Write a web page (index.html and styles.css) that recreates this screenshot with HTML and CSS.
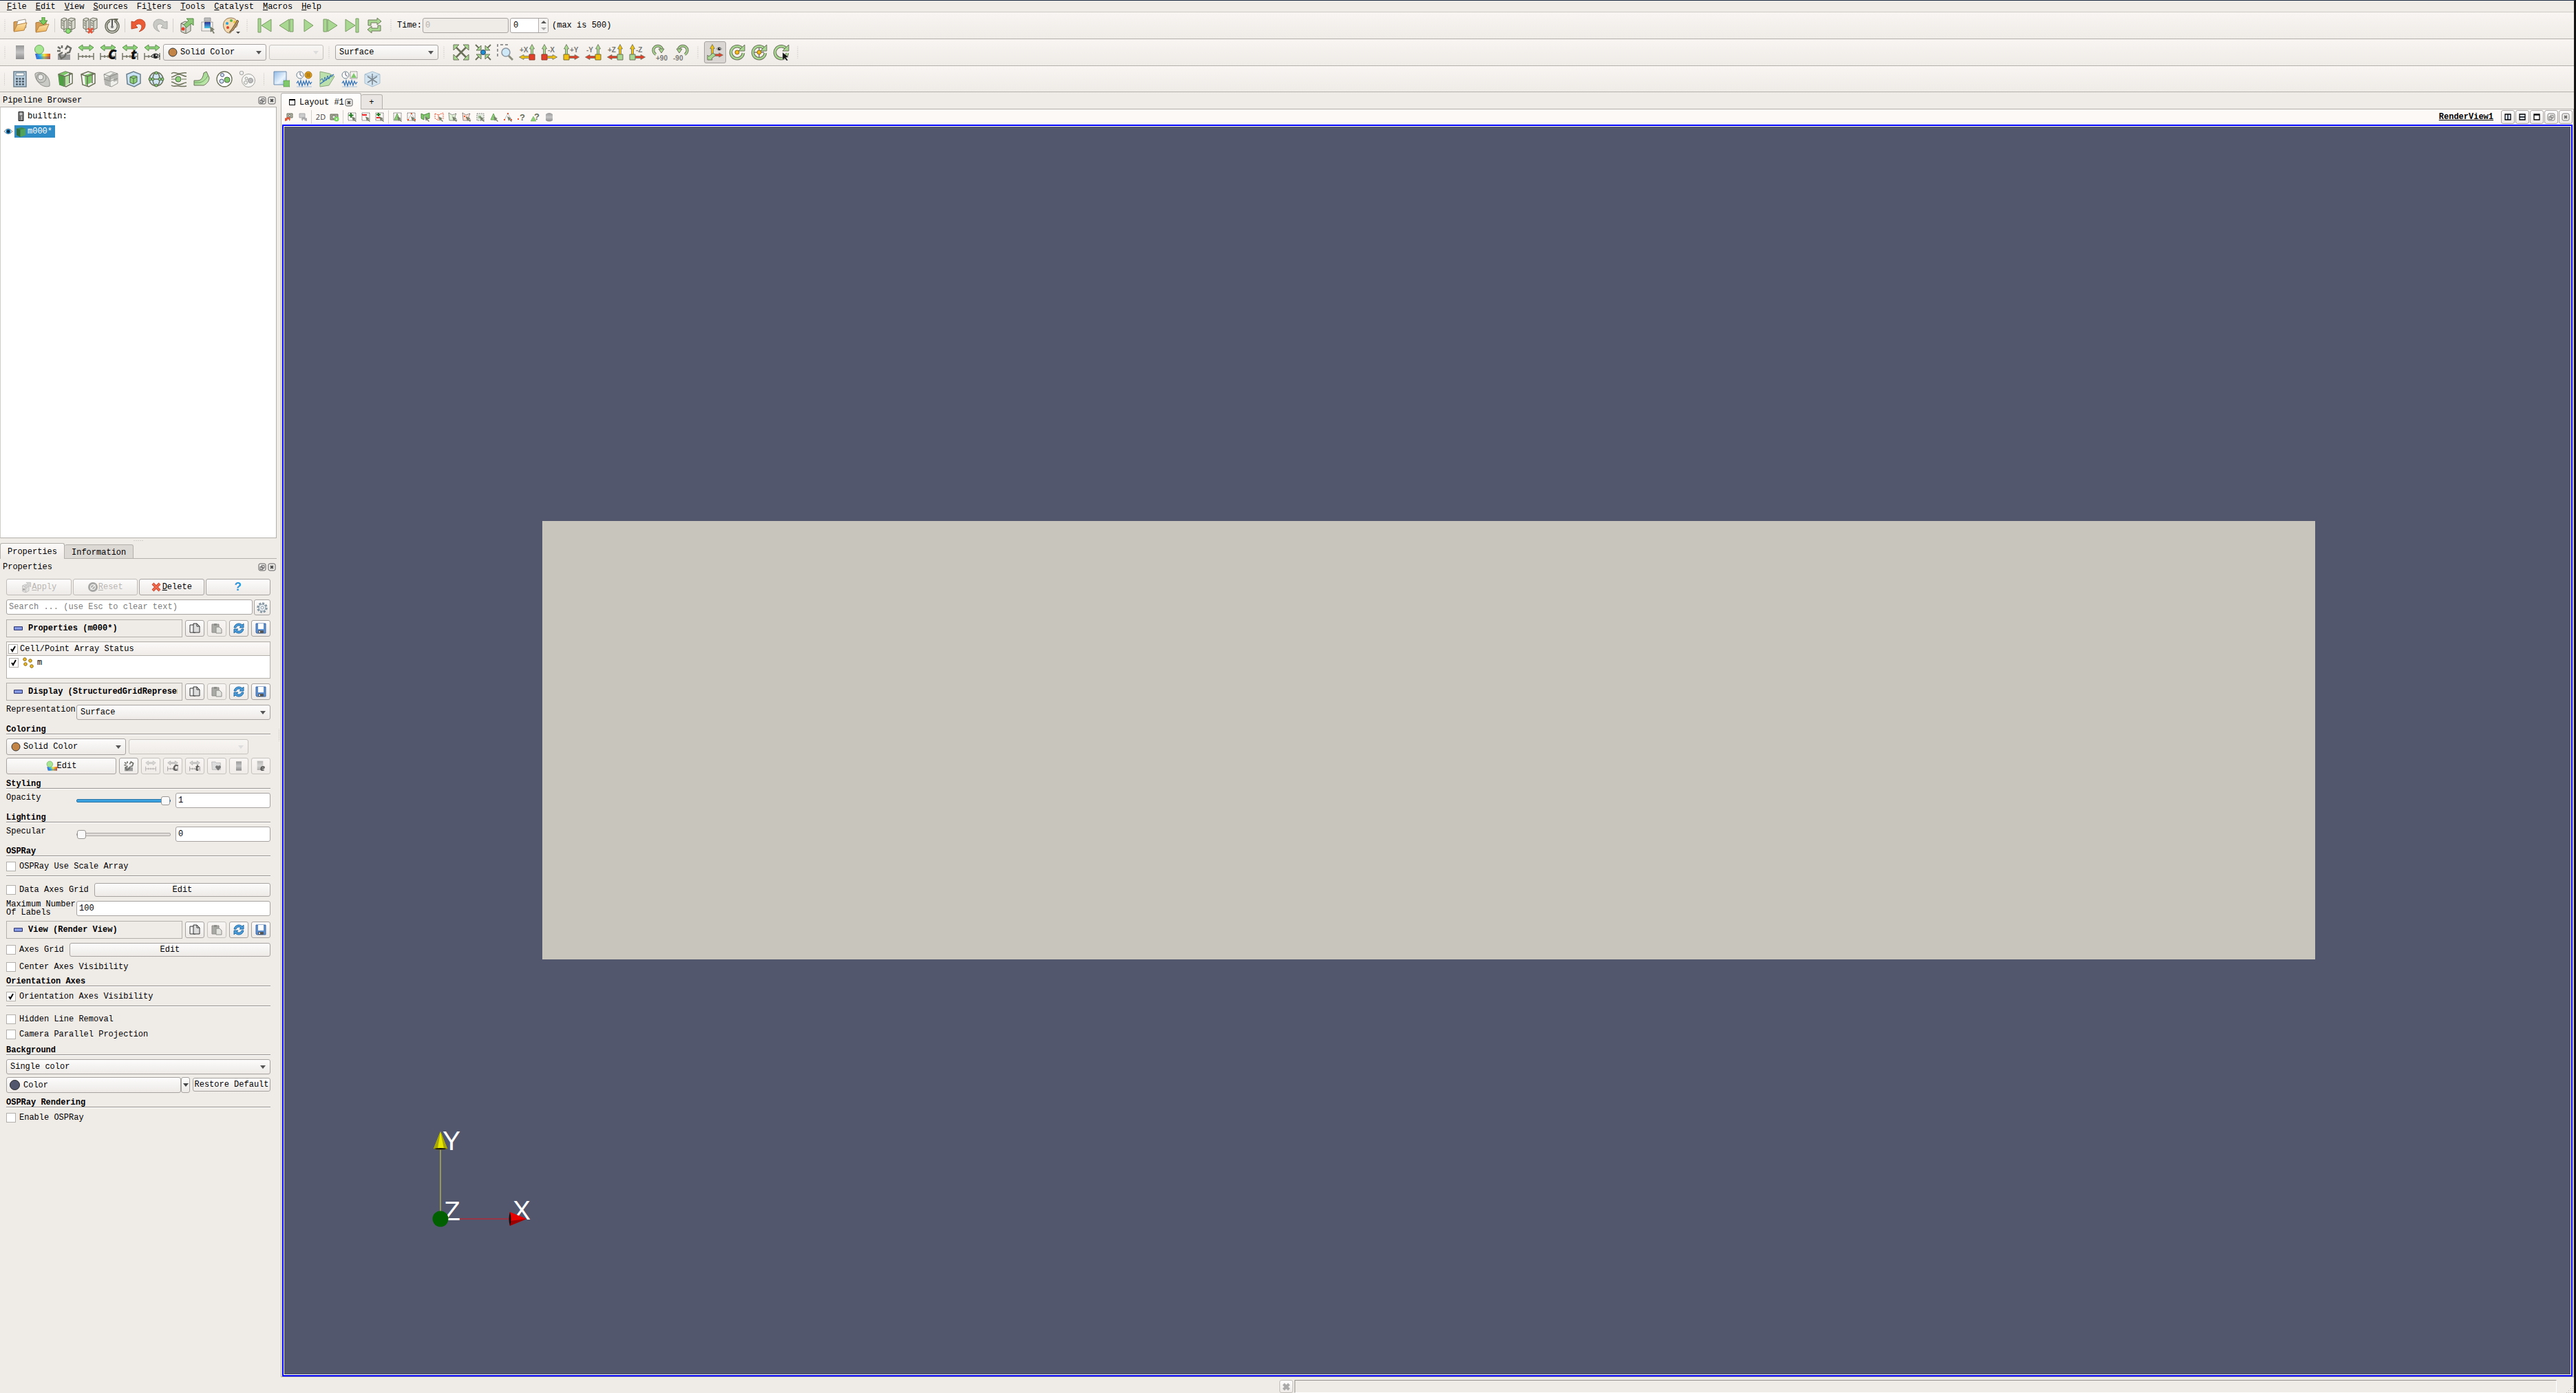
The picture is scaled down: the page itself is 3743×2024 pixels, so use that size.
FILE: index.html
```html
<!DOCTYPE html>
<html lang="en">
<head>
<meta charset="utf-8">
<title>ParaView</title>
<link rel="stylesheet" href="styles.css">
</head>
<body>
<svg class="defs" aria-hidden="true">
  <defs>
    <linearGradient id="g-green" x1="0" y1="0" x2="1" y2="1"><stop offset="0" stop-color="#8cc878"/><stop offset="1" stop-color="#c9efb8"/></linearGradient>
    <linearGradient id="g-grey" x1="0" y1="0" x2="0" y2="1"><stop offset="0" stop-color="#999"/><stop offset=".5" stop-color="#c4c4c4"/><stop offset="1" stop-color="#8c8c8c"/></linearGradient>
    <linearGradient id="g-rain"><stop offset="0" stop-color="#3a4fd0"/><stop offset=".35" stop-color="#35c4e8"/><stop offset=".6" stop-color="#f4e53a"/><stop offset="1" stop-color="#e04a20"/></linearGradient>
    <linearGradient id="g-blue" x1="0" y1="0" x2="0" y2="1"><stop offset="0" stop-color="#2a2f9a"/><stop offset="1" stop-color="#49c8e8"/></linearGradient>
    <linearGradient id="g-sky" x1="0" y1="0" x2="1" y2="1"><stop offset="0" stop-color="#8fb9e6"/><stop offset=".6" stop-color="#eaf4fd"/><stop offset="1" stop-color="#a9cbee"/></linearGradient>
    <linearGradient id="g-folder" x1="0" y1="0" x2="0" y2="1"><stop offset="0" stop-color="#fbe3ac"/><stop offset="1" stop-color="#efb55c"/></linearGradient>
  </defs>
  <symbol id="server" viewBox="0 0 24 24"><path d="M2 3l4-2 4 1v14l-4 2-4-2z" fill="#d9d9d0" stroke="#6b6d5c"/><path d="M2 4l4 2 4-3M6 6v12M3 8l2 1M3 11l2 1" fill="none" stroke="#6b6d5c"/><path d="M12 3l4-2 6 1v14l-5 2-5-2z" fill="#d9d9d0" stroke="#6b6d5c"/><path d="M12 4l5 2 5-3M17 6v12M13 8l3 1M13 11l3 1" fill="none" stroke="#6b6d5c"/><path d="M6 18v3h11v-3" fill="none" stroke="#6b6d5c"/></symbol>
  <symbol id="open" viewBox="0 0 24 24"><path d="M3 20V7l4-1 2 2 9-2v12z" fill="#d79f55" stroke="#a8773b"/><path d="M6 16l3-11 11-2 1 12-14 5z" fill="#fdfdfb" stroke="#9b958a"/><path d="M3 21l5-10 14-3-4 11z" fill="url(#g-folder)" stroke="#b58243"/></symbol>
  <symbol id="loadstate" viewBox="0 0 24 24"><path d="M3 21V8l5-1 2 2 8-2v12z" fill="#d79f55" stroke="#a8773b"/><path d="M3 22l5-9 14-3-4 10z" fill="url(#g-folder)" stroke="#b58243"/><path d="M12 0h4v5h4l-6 6-6-6h4z" fill="#7ccb5e" stroke="#4f8a3c"/></symbol>
  <symbol id="connect" viewBox="0 0 24 24"><use href="#server"/><circle cx="12" cy="20" r="3.500" fill="#8fe07a" stroke="#4f8a3c"/></symbol>
  <symbol id="disconnect" viewBox="0 0 24 24"><use href="#server"/><path d="M9 16l6 7M16 16l-7 7" stroke="#e4573c" stroke-width="3"/></symbol>
  <symbol id="timer" viewBox="0 0 24 24"><circle cx="12" cy="13" r="10" fill="#ecebe6" stroke="#6b6d5c" stroke-width="1.500"/><path d="M15 6a7.500 7.500 0 1 1-6 0" fill="none" stroke="#6b6d5c" stroke-width="1.500"/><path d="M12 3v11" stroke="#555" stroke-width="2"/><circle cx="12" cy="14" r="2" fill="#777"/><path d="M14 2h7l-3 5z" fill="#6b6d5c"/></symbol>
  <symbol id="undo" viewBox="0 0 24 24"><path d="M2 6v11l9-2-3-3c4-4 9-2 9 2 0 3-2 5-4 7 6-2 9-5 9-10 0-8-10-11-16-4z" fill="#ea5b36" stroke="#bf4a2b"/></symbol>
  <symbol id="redo" viewBox="0 0 24 24"><path d="M22 6v11l-9-2 3-3c-4-4-9-2-9 2 0 3 2 5 4 7-6-2-9-5-9-10 0-8 10-11 16-4z" fill="#c9c9c6" stroke="#a9a9a6"/></symbol>
  <symbol id="apply" viewBox="0 0 24 24"><path d="M4 9l6-3 8 3v11l-7 4-7-3z" fill="#d6d6cf" stroke="#6b6d5c"/><path d="M4 9l7 3 7-3M11 12v12" fill="none" stroke="#6b6d5c"/><circle cx="7" cy="17" r="2.500" fill="#e2402c"/><path d="M8 11l7-6-3-3h10v10l-3-3-7 6z" fill="#8cc878" stroke="#558a45"/></symbol>
  <symbol id="extract" viewBox="0 0 24 24"><path d="M6 1h9v5H6z" fill="#bbb" stroke="#999"/><path d="M6 7h9v9H6z" fill="url(#g-blue)"/><path d="M2 7h16v13H2z" fill="none" stroke="#555" stroke-dasharray="1 1"/><path d="M14 13l7 5-3 1 3 4-2 1-2-4-2 2z" fill="#7d806c"/></symbol>
  <symbol id="palette" viewBox="0 0 24 24"><path d="M12 1C4 1 0 8 2 15c2 6 5 8 9 8 3 0 1-4 3-6 2-3 8 0 8-7C22 4 18 1 12 1z" fill="#f3d9ad" stroke="#8f7752"/><circle cx="7" cy="9" r="2" fill="#2aa0dc"/><circle cx="8" cy="15" r="2" fill="#e2402c"/><circle cx="13" cy="5" r="2" fill="#5fb548"/><circle cx="18" cy="7" r="2" fill="#e8c83a"/><path d="M22 4l-8 13-4 5 6-3 8-13z" fill="#b79163" stroke="#6b5a3f"/></symbol>
  <symbol id="first" viewBox="0 0 24 24"><path d="M3 2h4v20H3zM22 3v18L8 12z" fill="#a9d893" stroke="#7b9b64"/></symbol>
  <symbol id="back" viewBox="0 0 24 24"><path d="M16 3v18L2 12zM17 3h5v18h-5z" fill="#a9d893" stroke="#7b9b64"/></symbol>
  <symbol id="play" viewBox="0 0 24 24"><path d="M6 3v18l13-9z" fill="#a9d893" stroke="#7b9b64"/></symbol>
  <symbol id="forward" viewBox="0 0 24 24"><path d="M8 3v18l14-9zM2 3h5v18H2z" fill="#a9d893" stroke="#7b9b64"/></symbol>
  <symbol id="last" viewBox="0 0 24 24"><path d="M17 2h4v20h-4zM2 3v18l14-9z" fill="#a9d893" stroke="#7b9b64"/></symbol>
  <symbol id="loop" viewBox="0 0 24 24"><path d="M3 12V4h13V1l6 5-6 5V8H7v4zM21 12v8H8v3l-6-5 6-5v3h9v-4z" fill="#a9d893" stroke="#6f7a5a"/></symbol>
  <symbol id="bar" viewBox="0 0 24 24"><path d="M6 2h12v20H6z" fill="url(#g-grey)"/></symbol>
  <symbol id="editmap" viewBox="0 0 24 24"><path d="M2 14h22v8H4z" fill="url(#g-rain)"/><path d="M6 18h18v4H6z" fill="#2451c8" opacity=".35"/><circle cx="8" cy="8" r="6.500" fill="#a6e592" stroke="#74a864"/></symbol>
  <symbol id="separate" viewBox="0 0 24 24"><path d="M3 15h18v8H3z" fill="#9a9a9a"/><path d="M14 8l3-5 5 3-2 6-4 1M10 12l-5 3 3 6 5-3 2-5M3 4l4 3M9 2v4M2 10h5" fill="none" stroke="#6d6d68" stroke-width="2.500"/></symbol>
  <symbol id="range" viewBox="0 0 24 24"><path d="M1 5l6-4v3h10V1l6 4-6 5V7H7v3z" fill="#8ed478" stroke="#5f8f50"/><path d="M1 13v10M23 13v10M1 18h22M7 16v4M12 16v4M17 16v4" stroke="#77786a" stroke-width="1.500"/></symbol>
  <symbol id="eye" viewBox="0 0 24 24"><path d="M1 12Q12-1 23 12 12 24 1 12z" fill="#fff" stroke="#333" stroke-width="2"/><circle cx="12" cy="12" r="6" fill="#222"/><circle cx="14" cy="10" r="2" fill="#fff"/></symbol>
  <symbol id="rangeeye" viewBox="0 0 24 24"><use href="#range"/><use href="#eye" x="10" y="11" width="14" height="13"/></symbol>
  <symbol id="calc" viewBox="0 0 24 24"><path d="M3 1h18v22H3z" fill="#b9cfdf" stroke="#6b7f8c" stroke-width="1.500"/><path d="M6 3h12v4H6z" fill="#fff" stroke="#6b7f8c"/><path d="M6 11.500h12M6 15.500h12M6 19.500h12" stroke="#4d5c66" stroke-width="2.500" stroke-dasharray="3 1.500"/></symbol>
  <symbol id="contour" viewBox="0 0 24 24"><path d="M1 4C7-1 24 4 22 22 12 26 0 14 1 4z" fill="#c9c9c6" stroke="#8d8d88"/><ellipse cx="10" cy="10" rx="7" ry="7" fill="none" stroke="#8d8d88"/><ellipse cx="9" cy="9" rx="4" ry="4" fill="#ececea" stroke="#8d8d88"/></symbol>
  <symbol id="clip" viewBox="0 0 24 24"><path d="M2 5l10-4 10 3v14l-9 5-9-3z" fill="#fff" stroke="#6b7058" stroke-width="1.500"/><path d="M2 5l8 2v16l-7-3z" fill="#4f9e43"/><path d="M10 8l8-2v12l-8 5z" fill="#b5e3a2"/><path d="M2 5l10-4 5 2-8 4z" fill="#7fc96c"/><path d="M2 5l9 3 11-4M11 8v15M18 3v15" fill="none" stroke="#6b7058" stroke-width="1.500"/></symbol>
  <symbol id="slice" viewBox="0 0 24 24"><path d="M2 5l10-4 10 3v14l-9 5-9-3z" fill="#f6f6f2" stroke="#6b7058" stroke-width="1.500"/><path d="M7 6l10-3v14l-9 4z" fill="#7fc96c"/><path d="M2 5l9 3 11-4M11 8v15M18 3v15" fill="none" stroke="#6b7058" stroke-width="1.500"/></symbol>
  <symbol id="threshold" viewBox="0 0 24 24"><path d="M2 5l10-4 10 3v14l-9 5-9-3z" fill="#efefec" stroke="#9a9a94"/><path d="M2 10l8-3 5-4 7 2v9l-6 2v-5l-6 3v8l-7-3z" fill="#b5b5b1"/><path d="M2 5l9 3 11-4M11 8v15M2 12l9 3 11-4" fill="none" stroke="#8d8d88"/></symbol>
  <symbol id="subset" viewBox="0 0 24 24"><path d="M2 5l10-4 10 4v13l-9 5-10-4z" fill="#c9e2f4" stroke="#6b7f8c" stroke-width="1.500"/><path d="M7 9l5-2 5 1v8l-5 3-5-2z" fill="#8fd07a" stroke="#4d6b45"/><path d="M7 9l5 2 5-2M12 11v8" fill="none" stroke="#4d6b45"/></symbol>
  <symbol id="glyph" viewBox="0 0 24 24"><circle cx="12" cy="12" r="10" fill="#cfe5f4" stroke="#6b7058" stroke-width="1.500"/><ellipse cx="12" cy="12" rx="5" ry="10" fill="none" stroke="#6b7058" stroke-width="1.500"/><path d="M2 12h20" stroke="#6b7058" stroke-width="1.500"/><g fill="#8fd07a" stroke="#4d6b45"><circle cx="12" cy="3" r="2"/><circle cx="12" cy="21" r="2"/><circle cx="3" cy="12" r="2"/><circle cx="21" cy="12" r="2"/><circle cx="7" cy="12" r="2"/><circle cx="17" cy="12" r="2"/></g></symbol>
  <symbol id="stream" viewBox="0 0 24 24"><path d="M1 4c4-4 6 0 11 0s6-2 11-1M1 9c4 0 6-4 11-4s6 3 11 3M1 16c4 0 6 4 11 4s6-3 11-3M1 21c4 3 6 0 11 1s6 1 11 0" fill="none" stroke="#6b7058" stroke-width="1.500"/><path d="M1 12h6M16 12h7" stroke="#6b7058"/><circle cx="11" cy="12" r="4" fill="#8fd07a" stroke="#4d6b45"/></symbol>
  <symbol id="warp" viewBox="0 0 24 24"><path d="M1 14h5c6 0 8-5 9-11l4-2 4 9c0 5-4 9-8 11H1z" fill="url(#g-green)" stroke="#6b7058"/><path d="M1 17h8c6-1 10-6 12-10" fill="none" stroke="#6da35c"/></symbol>
  <symbol id="group" viewBox="0 0 24 24"><circle cx="12" cy="12" r="11" fill="#fff" stroke="#6b7058" stroke-width="1.300"/><circle cx="9" cy="6" r="2.500" fill="#cfe5f4" stroke="#557"/><circle cx="8" cy="15" r="3" fill="#cfe5f4" stroke="#557"/><circle cx="16" cy="13" r="4" fill="#7fc96c" stroke="#4d6b45"/></symbol>
  <symbol id="extractgroup" viewBox="0 0 24 24"><circle cx="14" cy="14" r="9.500" fill="#f6f6f4" stroke="#a2a29d"/><circle cx="4" cy="3" r="2.800" fill="#eee" stroke="#a2a29d"/><circle cx="11" cy="11" r="2" fill="#eee" stroke="#a2a29d"/><circle cx="10" cy="17" r="2.500" fill="#eee" stroke="#a2a29d"/><circle cx="17" cy="14" r="3.500" fill="#bbb" stroke="#999"/></symbol>
  <symbol id="extractsel" viewBox="0 0 24 24"><path d="M1 1h18v19H1z" fill="url(#g-sky)" stroke="#6c8cb0"/><path d="M15 14h9v9h-9z" fill="#7fc96c" stroke="#3f7a35" stroke-dasharray="1 1"/></symbol>
  <symbol id="wave" viewBox="0 0 24 24"><path d="M1 18l2-3 2 6 2-7 2 8 2-7 2 5 2-6 2 7 2-6 2 4 2-3" fill="none" stroke="#3a78b8" stroke-width="1.300"/><path d="M1 23h22" stroke="#aac4dd"/></symbol>
  <symbol id="plottime" viewBox="0 0 24 24"><use href="#wave"/><circle cx="6" cy="6" r="5" fill="#fff" stroke="#6b7f8c"/><path d="M6 2v4l3 2" fill="none" stroke="#557"/><circle cx="18" cy="6" r="5" fill="#e8a51c" stroke="#a0741c"/><path d="M15 4h6M15 6h6M15 8h6" stroke="#8a6114"/></symbol>
  <symbol id="plotline" viewBox="0 0 24 24"><path d="M2 1l14 3 7 4-8 13-13 2z" fill="#bce0ac" stroke="#8aa87c"/><path d="M2 19L22 5" stroke="#3a78b8" stroke-width="1.500"/><path d="M2 14l3-3 2 5 2-7 2 5 2-7 2 5 2-6 3 3" fill="none" stroke="#3a78b8"/></symbol>
  <symbol id="plotsel" viewBox="0 0 24 24"><use href="#wave"/><circle cx="6" cy="6" r="5" fill="#fff" stroke="#6b7f8c"/><path d="M6 2v4l3 2" fill="none" stroke="#557"/><path d="M13 1h10v10H13z" fill="none" stroke="#555" stroke-dasharray="1 1"/><path d="M18 3l4 7h-8z" fill="#7fc96c"/></symbol>
  <symbol id="probe" viewBox="0 0 24 24"><path d="M1 5l11-4 11 4v13l-11 5-11-5z" fill="#d3e4f1" stroke="#a9bfd0"/><path d="M1 5l11 4 11-4M12 9v14" fill="none" stroke="#a9bfd0"/><path d="M12 4v16M5 8l14 9M19 8L5 17" stroke="#7d8890" stroke-width="1.500"/></symbol>
  <symbol id="resetcam" viewBox="0 0 24 24"><path d="M4 4l16 16M20 4L4 20" stroke="#6b7058" stroke-width="2.500"/><path d="M1 1h8L1 9zM23 1v8l-8-8zM1 23v-8l8 8zM23 23h-8l8-8z" fill="#a9d893" stroke="#6b7058"/></symbol>
  <symbol id="zoomdata" viewBox="0 0 24 24"><path d="M1 1l5 5M23 1l-5 5M1 23l5-5M23 23l-5-5" stroke="#6b7058" stroke-width="2"/><path d="M9 9H2l7-7zM15 9V2l7 7zM9 15v7l-7-7zM15 15h7l-7 7z" fill="#a9d893" stroke="#6b7058"/><circle cx="12" cy="12" r="3.500" fill="#1e8fd5" stroke="#345"/></symbol>
  <symbol id="zoombox" viewBox="0 0 24 24"><path d="M1 18V1h18" fill="none" stroke="#777" stroke-width="1.500" stroke-dasharray="4 3"/><path d="M17 17l6 6" stroke="#8b8e7b" stroke-width="3"/><circle cx="13" cy="12" r="6" fill="#cfe8f8" stroke="#8c96a0" stroke-width="1.500"/></symbol>
  <symbol id="up" viewBox="0 0 8 18"><path d="M2.500 18V7H.500L4 .500 7.500 7h-2v11z" stroke="#6b7058" stroke-width=".8"/></symbol>
  <symbol id="side" viewBox="0 0 18 8"><path d="M18 2.500H7V.500L.500 4 7 7.500v-2h11z" stroke="#6b7058" stroke-width=".8"/></symbol>
  <symbol id="px" viewBox="0 0 24 24"><use href="#up" x="15" y="0" width="8" height="18" fill="#a9d893"/><use href="#side" x="0" y="15" width="18" height="8" fill="#f1c111"/><path d="M15 15h8v8h-8z" fill="#e3402c" stroke="#8e3a26"/></symbol>
  <symbol id="nx" viewBox="0 0 24 24"><use href="#up" x="1" y="0" width="8" height="18" fill="#a9d893"/><use href="#side" x="0" y="15" width="18" height="8" fill="#f1c111" transform="translate(24 0) scale(-1 1)"/><path d="M1 15h8v8H1z" fill="#e3402c" stroke="#8e3a26"/></symbol>
  <symbol id="py" viewBox="0 0 24 24"><use href="#up" x="1" y="0" width="8" height="18" fill="#a9d893"/><use href="#side" x="0" y="15" width="18" height="8" fill="#e3402c" transform="translate(24 0) scale(-1 1)"/><path d="M1 15h8v8H1z" fill="#f1c111" stroke="#7c6a2a"/></symbol>
  <symbol id="ny" viewBox="0 0 24 24"><use href="#up" x="15" y="0" width="8" height="18" fill="#a9d893"/><use href="#side" x="0" y="15" width="18" height="8" fill="#e3402c"/><path d="M15 15h8v8h-8z" fill="#f1c111" stroke="#7c6a2a"/></symbol>
  <symbol id="pz" viewBox="0 0 24 24"><use href="#up" x="15" y="0" width="8" height="18" fill="#f1c111"/><use href="#side" x="0" y="15" width="18" height="8" fill="#e3402c"/><path d="M15 15h8v8h-8z" fill="#a9d893" stroke="#6b7058"/></symbol>
  <symbol id="nz" viewBox="0 0 24 24"><use href="#up" x="1" y="0" width="8" height="18" fill="#f1c111"/><use href="#side" x="0" y="15" width="18" height="8" fill="#e3402c" transform="translate(24 0) scale(-1 1)"/><path d="M1 15h8v8H1z" fill="#a9d893" stroke="#6b7058"/></symbol>
  <symbol id="turn" viewBox="0 0 24 24"><path d="M7 15a6.500 6.500 0 1 1 9-8" fill="none" stroke="#6b7058" stroke-width="4"/><path d="M7 15a6.500 6.500 0 1 1 9-8" fill="none" stroke="#a9d893" stroke-width="2"/><path d="M11 7h8l-4 6z" fill="#a9d893" stroke="#6b7058"/></symbol>
  <symbol id="axes" viewBox="0 0 24 24"><use href="#up" x="4" y="0" width="8" height="17" fill="#f1c111"/><use href="#side" x="0" y="12" width="16" height="8" fill="#e3402c" transform="translate(24 0) scale(-1 1)"/><path d="M9 13l4 3-6 5 1 2H1v-7l2 2z" fill="#a9d893" stroke="#6b7058"/><use href="#eye" x="13" y="3" width="10" height="8"/></symbol>
  <symbol id="ring" viewBox="0 0 24 24"><path d="M20 8a9 9 0 1 0 1 5" fill="none" stroke="#6b7058" stroke-width="4.500"/><path d="M20 8a9 9 0 1 0 1 5" fill="none" stroke="#a9d893" stroke-width="2.500"/><path d="M23 1v9h-9z" fill="#a9d893" stroke="#6b7058"/></symbol>
  <symbol id="center" viewBox="0 0 24 24"><use href="#ring"/><circle cx="12" cy="12" r="3" fill="#f4b81a" stroke="#8a6a1c"/></symbol>
  <symbol id="resetcenter" viewBox="0 0 24 24"><use href="#ring"/><path d="M12 5v14M5 12h14" stroke="#777" stroke-width="1.500"/><circle cx="12" cy="12" r="3" fill="#f4b81a" stroke="#8a6a1c"/></symbol>
  <symbol id="pickcenter" viewBox="0 0 24 24"><use href="#ring"/><path d="M14 12l9 7-4 .5 3 4-2 1-3-4-3 3z" fill="#111" stroke="#eee" stroke-width=".5"/></symbol>
  <symbol id="float" viewBox="0 0 12 12"><rect x="1" y="1" width="10" height="10" rx="2" fill="#f3f1ee" stroke="#5f5f5f"/><path d="M5 3.500h4v4H5zM3 5.500h4v4H3z" fill="#f3f1ee" stroke="#5f5f5f"/></symbol>
  <symbol id="close" viewBox="0 0 12 12"><rect x="1" y="1" width="10" height="10" rx="2" fill="#f3f1ee" stroke="#5f5f5f"/><path d="M4 4l4 4M8 4L4 8" stroke="#4d4d4d" stroke-width="2"/></symbol>
  <symbol id="copy" viewBox="0 0 16 16"><path d="M1 3h6l2 2v9H1z" fill="#f3f3f3" stroke="#333"/><path d="M6 1h5l4 4v9H6z" fill="#ddd" stroke="#333"/><path d="M11 1v4h4" fill="none" stroke="#333"/></symbol>
  <symbol id="paste" viewBox="0 0 16 16"><path d="M1 2h10v12H1z" fill="#a9a9a6" stroke="#8b8b88"/><path d="M4 1h4v3H4z" fill="#8b8b88"/><path d="M7 6h5l3 3v6H7z" fill="#e3e3e0" stroke="#8b8b88"/></symbol>
  <symbol id="refresh" viewBox="0 0 16 16"><path d="M1 7c1-6 8-8 12-4l2-2v6H9l2-2C8 3 5 4 4 7zM15 9c-1 6-8 8-12 4l-2 2V9h6l-2 2c3 2 6 1 7-2z" fill="#4b9bd8" stroke="#276ea8"/></symbol>
  <symbol id="save" viewBox="0 0 16 16"><path d="M1 1h14v14H2l-1-1z" fill="#5b8fd0" stroke="#3d68a8"/><path d="M4 1h8v8H4z" fill="#fff"/><path d="M4 11h8v4H4z" fill="#555"/><path d="M5 12h2v2H5z" fill="#ddd"/></symbol>
  <symbol id="minus" viewBox="0 0 14 6"><path d="M.500 .500h13v5H.500z" fill="#8a9fe8" stroke="#141b5c"/></symbol>
  <symbol id="dots" viewBox="0 0 16 16"><g fill="#f0bd2a" stroke="#8a6a1c"><circle cx="3" cy="3" r="2.300"/><circle cx="11" cy="5" r="2.300"/><circle cx="4" cy="10" r="2.300"/><circle cx="13" cy="13" r="2.300"/></g></symbol>
  <symbol id="redx" viewBox="0 0 14 14"><path d="M2 2l10 10M12 2L2 12" stroke="#b83a22" stroke-width="4"/><path d="M2 2l10 10M12 2L2 12" stroke="#f0694c" stroke-width="2.500"/></symbol>
  <symbol id="nosign" viewBox="0 0 16 16"><circle cx="8" cy="8" r="7" fill="#a5a5a3"/><circle cx="8" cy="8" r="3.500" fill="none" stroke="#efefed" stroke-width="1.500"/><path d="M4.500 11.500l7-7" stroke="#efefed" stroke-width="1.500"/></symbol>
  <symbol id="gear" viewBox="0 0 16 16"><circle cx="8" cy="8" r="6.500" fill="none" stroke="#8496a2" stroke-width="2.500" stroke-dasharray="3 2"/><circle cx="8" cy="8" r="5" fill="#e8eef2" stroke="#8496a2"/><circle cx="8" cy="8" r="2" fill="#fff" stroke="#8496a2"/></symbol>
  <symbol id="folderheart" viewBox="0 0 24 24"><path d="M1 3h8l2 2h9v15H2z" fill="#ddd" stroke="#aaa"/><path d="M15 22l-6-7c0-5 5-5 6-2 1-3 6-3 6 2z" fill="#777"/></symbol>
  <symbol id="host" viewBox="0 0 8 14"><path d="M.500 .500h7v13h-7z" fill="#777" stroke="#222"/><path d="M2 2.500h4M2 4.500h4" stroke="#fff"/><path d="M5 7v5" stroke="#ccc"/></symbol>
  <symbol id="cube" viewBox="0 0 16 16"><path d="M1 3l8-2 6 2v10l-8 3-6-3z" fill="#3f8a52"/><path d="M1 3l6 2v11l-6-3z" fill="#2d6b41"/><path d="M7 5l8-2v10l-8 3z" fill="#4fa25c"/></symbol>
  <symbol id="blueeye" viewBox="0 0 16 12"><path d="M1 6Q8-3 15 6 8 14 1 6z" fill="#e8f2fa" stroke="#777"/><circle cx="8" cy="6" r="4" fill="#1b86c9"/><circle cx="8" cy="6" r="2.500" fill="#0b2a44"/></symbol>
  <symbol id="frame" viewBox="0 0 14 14"><path d="M1 1h11v11H1z" fill="none" stroke="#444" stroke-dasharray="1 1"/></symbol>
  <symbol id="mouse" viewBox="0 0 14 14"><path d="M6 6l6 3-2 1 3 3-1 1-3-3-1 2z" fill="#77806a"/></symbol>
  <symbol id="camundo" viewBox="0 0 14 14"><path d="M4 2h8v6H4z" fill="#b9b9a8" stroke="#6b6d5c"/><circle cx="8" cy="5" r="1.500" fill="#fff" stroke="#6b6d5c"/><path d="M1 8v5l4-1-1-1c2-2 4 0 3 2 3-2 2-6-1-6-2 0-3 1-4 2z" fill="#d9583a"/></symbol>
  <symbol id="camredo" viewBox="0 0 14 14"><path d="M2 2h8v6H2z" fill="#ccc" stroke="#aaa"/><path d="M13 8v5l-4-1 1-1c-2-2-4 0-3 2-3-2-2-6 1-6 2 0 3 1 4 2z" fill="#aaa"/></symbol>
  <symbol id="camgo" viewBox="0 0 14 14"><path d="M1 3h11v8H1z" fill="#a5a894" stroke="#6b6d5c"/><circle cx="6" cy="7" r="2.500" fill="#ddd" stroke="#6b6d5c"/><circle cx="10" cy="10" r="3.500" fill="#7cd764"/><circle cx="10" cy="10" r="1" fill="#fff"/></symbol>
  <symbol id="seladd" viewBox="0 0 14 14"><use href="#frame"/><path d="M5 1v7M1.500 4.500h7" stroke="#1d7a1d" stroke-width="2"/><use href="#mouse"/></symbol>
  <symbol id="selsub" viewBox="0 0 14 14"><use href="#frame"/><path d="M1 4h7" stroke="#e22" stroke-width="2"/><use href="#mouse"/></symbol>
  <symbol id="seltog" viewBox="0 0 14 14"><use href="#frame"/><path d="M5 1v5M2 3.500h6" stroke="#1d7a1d" stroke-width="2"/><path d="M2 8h6" stroke="#e22" stroke-width="2"/><use href="#mouse"/></symbol>
  <symbol id="tri" viewBox="0 0 14 14"><path d="M6 2l4 9H2z" fill="#8fd07a" stroke="#6aa358"/><use href="#mouse"/></symbol>
  <symbol id="pts" viewBox="0 0 14 14"><path d="M7 2L2 11M7 2l5 9" stroke="#bbb"/><path d="M6 1h2v2H6zM1 10h2v2H1zM11 10h2v2h-2z" fill="#f0522e"/><use href="#mouse"/></symbol>
  <symbol id="selcell" viewBox="0 0 14 14"><use href="#frame"/><use href="#tri"/></symbol>
  <symbol id="selpt" viewBox="0 0 14 14"><use href="#frame"/><use href="#pts"/></symbol>
  <symbol id="frcell" viewBox="0 0 14 14"><path d="M1 2l4 2v7l-4-2zM5 4l8-3v8l-3 1" fill="#7fc96c" stroke="#558a45"/><use href="#mouse"/></symbol>
  <symbol id="frpt" viewBox="0 0 14 14"><path d="M1 2l5 2v8l-5-3zM6 4l7-3v9" fill="none" stroke="#f0522e" stroke-dasharray="2 1"/><use href="#mouse"/></symbol>
  <symbol id="polycell" viewBox="0 0 14 14"><path d="M1 1l5 3 6-2-2 5 3 5H2z" fill="#dff0d6" stroke="#333" stroke-dasharray="1 1"/><use href="#mouse"/></symbol>
  <symbol id="polypt" viewBox="0 0 14 14"><path d="M1 1l5 3 6-2-2 5 3 5H2z" fill="#fbe0d6" stroke="#333" stroke-dasharray="1 1"/><path d="M3 5h2v2H3zM6 7h2v2H6z" fill="#f0522e"/><use href="#mouse"/></symbol>
  <symbol id="selblk" viewBox="0 0 14 14"><path d="M2 2h10v10H2z" fill="#e6ebe2" stroke="#888" stroke-dasharray="2 1"/><path d="M4 5h4v4H4z" fill="#9dbb92"/><use href="#mouse"/></symbol>
  <symbol id="hoverpt" viewBox="0 0 14 14"><path d="M1 9h2v2H1z" fill="#f0522e"/></symbol>
  <symbol id="hovercell" viewBox="0 0 14 14"><path d="M4 6l4 7H0z" fill="#8fd07a" stroke="#6aa358" stroke-width=".5"/></symbol>
  <symbol id="trash" viewBox="0 0 14 14"><path d="M2 3q5-4 10 0v9q-5 3-10 0z" fill="url(#g-grey)"/></symbol>
  <symbol id="splith" viewBox="0 0 10 10"><path d="M1 1h8v8H1zM5 1v8" fill="#dfe8f8" stroke="#000" stroke-width="1.300"/></symbol>
  <symbol id="splitv" viewBox="0 0 10 10"><path d="M1 1h8v8H1zM1 5h8" fill="#dfe8f8" stroke="#000" stroke-width="1.300"/></symbol>
  <symbol id="maxi" viewBox="0 0 10 10"><path d="M1 1h8v8H1zM1 2h8" fill="#fff" stroke="#000" stroke-width="1.300"/></symbol>
</svg>

<nav class="menubar">
  <button><u>F</u>ile</button><button><u>E</u>dit</button><button><u>V</u>iew</button><button><u>S</u>ources</button><button>Fi<u>l</u>ters</button><button><u>T</u>ools</button><button><u>C</u>atalyst</button><button><u>M</u>acros</button><button><u>H</u>elp</button>
</nav>

<div class="toolbar">
  <i class="grip"></i>
  <button class="tool" aria-label="Open"><svg><use href="#open"/></svg></button>
  <button class="tool" aria-label="Load state"><svg><use href="#loadstate"/></svg></button>
  <i class="sep"></i>
  <button class="tool" aria-label="Connect"><svg><use href="#connect"/></svg></button>
  <button class="tool" aria-label="Disconnect"><svg><use href="#disconnect"/></svg></button>
  <button class="tool" aria-label="Auto apply"><svg><use href="#timer"/></svg></button>
  <i class="sep"></i>
  <button class="tool" aria-label="Undo"><svg><use href="#undo"/></svg></button>
  <button class="tool" aria-label="Redo"><svg><use href="#redo"/></svg></button>
  <i class="sep"></i>
  <button class="tool" aria-label="Apply changes"><svg><use href="#apply"/></svg></button>
  <button class="tool" aria-label="Find data"><svg><use href="#extract"/></svg></button>
  <button class="tool drop" aria-label="Color palette"><svg><use href="#palette"/></svg></button>
  <i class="grip"></i>
  <button class="tool" aria-label="First frame"><svg><use href="#first"/></svg></button>
  <button class="tool" aria-label="Previous frame"><svg><use href="#back"/></svg></button>
  <button class="tool" aria-label="Play"><svg><use href="#play"/></svg></button>
  <button class="tool" aria-label="Next frame"><svg><use href="#forward"/></svg></button>
  <button class="tool" aria-label="Last frame"><svg><use href="#last"/></svg></button>
  <button class="tool" aria-label="Loop"><svg><use href="#loop"/></svg></button>
  <i class="grip"></i>
  <label for="time">Time:</label>
  <input class="field time" id="time" value="0" disabled>
  <span class="spin"><input id="step" aria-label="Time step" value="0"><span class="arrows"><i></i><i></i></span></span>
  <span class="hint">(max is 500)</span>
</div>

<div class="toolbar">
  <i class="grip"></i>
  <button class="tool" aria-label="Color legend"><svg><use href="#bar"/></svg></button>
  <button class="tool" aria-label="Edit color map"><svg><use href="#editmap"/></svg></button>
  <button class="tool" aria-label="Separate color map"><svg><use href="#separate"/></svg></button>
  <button class="tool" aria-label="Rescale to data"><svg><use href="#range"/></svg></button>
  <button class="tool" aria-label="Rescale custom"><svg viewBox="0 0 24 24"><use href="#range"/><text x="12" y="22" class="ico-letter">C</text></svg></button>
  <button class="tool" aria-label="Rescale over time"><svg viewBox="0 0 24 24"><use href="#range"/><text x="13" y="22" class="ico-letter">t</text></svg></button>
  <button class="tool" aria-label="Rescale to visible"><svg><use href="#rangeeye"/></svg></button>
  <select class="combo swatch mid" aria-label="Coloring"><option>Solid Color</option></select>
  <select class="combo off small" aria-label="Component" disabled><option></option></select>
  <i class="grip"></i>
  <select class="combo mid" aria-label="Representation"><option>Surface</option></select>
  <i class="grip"></i>
  <button class="tool" aria-label="Reset camera"><svg><use href="#resetcam"/></svg></button>
  <button class="tool" aria-label="Zoom to data"><svg><use href="#zoomdata"/></svg></button>
  <button class="tool" aria-label="Zoom to box"><svg><use href="#zoombox"/></svg></button>
  <button class="tool" aria-label="View +X"><svg viewBox="0 0 24 24"><use href="#px"/><text x="1" y="12" class="ico-axis">+X</text></svg></button>
  <button class="tool" aria-label="View -X"><svg viewBox="0 0 24 24"><use href="#nx"/><text x="10" y="12" class="ico-axis">-X</text></svg></button>
  <button class="tool" aria-label="View +Y"><svg viewBox="0 0 24 24"><use href="#py"/><text x="10" y="12" class="ico-axis">+Y</text></svg></button>
  <button class="tool" aria-label="View -Y"><svg viewBox="0 0 24 24"><use href="#ny"/><text x="2" y="12" class="ico-axis">-Y</text></svg></button>
  <button class="tool" aria-label="View +Z"><svg viewBox="0 0 24 24"><use href="#pz"/><text x="1" y="12" class="ico-axis">+Z</text></svg></button>
  <button class="tool" aria-label="View -Z"><svg viewBox="0 0 24 24"><use href="#nz"/><text x="10" y="12" class="ico-axis">-Z</text></svg></button>
  <button class="tool" aria-label="Rotate +90"><svg viewBox="0 0 24 24"><use href="#turn"/><text x="7" y="24" class="ico-axis">+90</text></svg></button>
  <button class="tool" aria-label="Rotate -90"><svg viewBox="0 0 24 24"><use href="#turn" transform="translate(24 0) scale(-1 1)"/><text x="0" y="24" class="ico-axis">-90</text></svg></button>
  <i class="grip"></i>
  <button class="tool pressed" aria-label="Show orientation axes"><svg><use href="#axes"/></svg></button>
  <button class="tool" aria-label="Show center"><svg><use href="#center"/></svg></button>
  <button class="tool" aria-label="Reset center"><svg><use href="#resetcenter"/></svg></button>
  <button class="tool" aria-label="Pick center"><svg><use href="#pickcenter"/></svg></button>
  <i class="grip"></i>
</div>

<div class="toolbar spaced">
  <i class="grip"></i>
  <button class="tool" aria-label="Calculator"><svg><use href="#calc"/></svg></button>
  <button class="tool" aria-label="Contour"><svg><use href="#contour"/></svg></button>
  <button class="tool" aria-label="Clip"><svg><use href="#clip"/></svg></button>
  <button class="tool" aria-label="Slice"><svg><use href="#slice"/></svg></button>
  <button class="tool" aria-label="Threshold"><svg><use href="#threshold"/></svg></button>
  <button class="tool" aria-label="Extract subset"><svg><use href="#subset"/></svg></button>
  <button class="tool" aria-label="Glyph"><svg><use href="#glyph"/></svg></button>
  <button class="tool" aria-label="Stream tracer"><svg><use href="#stream"/></svg></button>
  <button class="tool" aria-label="Warp"><svg><use href="#warp"/></svg></button>
  <button class="tool" aria-label="Group datasets"><svg><use href="#group"/></svg></button>
  <button class="tool" aria-label="Extract group"><svg><use href="#extractgroup"/></svg></button>
  <i class="grip"></i>
  <button class="tool" aria-label="Extract selection"><svg><use href="#extractsel"/></svg></button>
  <button class="tool" aria-label="Plot over time"><svg><use href="#plottime"/></svg></button>
  <button class="tool" aria-label="Plot over line"><svg><use href="#plotline"/></svg></button>
  <button class="tool" aria-label="Plot selection over time"><svg><use href="#plotsel"/></svg></button>
  <button class="tool" aria-label="Probe"><svg><use href="#probe"/></svg></button>
</div>

<div class="workspace">
  <aside class="dock">
    <div class="dock-title"><span>Pipeline Browser</span><button class="mini" aria-label="Float"><svg><use href="#float"/></svg></button><button class="mini" aria-label="Close"><svg><use href="#close"/></svg></button></div>
    <div class="tree">
      <div class="node"><span class="vis"></span><span class="item"><svg class="host"><use href="#host"/></svg>builtin:</span></div>
      <div class="node"><span class="vis"><svg><use href="#blueeye"/></svg></span><span class="item selected"><svg><use href="#cube"/></svg>m000*</span></div>
    </div>
    <div class="splitter"></div>
    <section class="lower">
      <div class="tabs"><button class="tab current">Properties</button><button class="tab">Information</button></div>
      <div class="dock-title"><span>Properties</span><button class="mini" aria-label="Float"><svg><use href="#float"/></svg></button><button class="mini" aria-label="Close"><svg><use href="#close"/></svg></button></div>
      <form class="props">
        <div class="actions">
          <button type="button" class="btn" disabled><svg class="faded"><use href="#apply"/></svg><span><u>A</u>pply</span></button>
          <button type="button" class="btn" disabled><svg><use href="#nosign"/></svg><span><u>R</u>eset</span></button>
          <button type="button" class="btn"><svg class="cross"><use href="#redx"/></svg><span><u>D</u>elete</span></button>
          <button type="button" class="btn help">?</button>
        </div>
        <div class="line search">
          <input class="field grow" aria-label="Search properties" placeholder="Search ... (use Esc to clear text)">
          <button type="button" class="btn gear" aria-label="Advanced"><svg><use href="#gear"/></svg></button>
        </div>
        <div class="section"><button type="button" class="fold"><svg><use href="#minus"/></svg><span>Properties (m000*)</span></button><button type="button" class="btn" aria-label="Copy"><svg><use href="#copy"/></svg></button><button type="button" class="btn off" aria-label="Paste"><svg><use href="#paste"/></svg></button><button type="button" class="btn" aria-label="Restore"><svg><use href="#refresh"/></svg></button><button type="button" class="btn" aria-label="Save"><svg><use href="#save"/></svg></button></div>
        <table class="arrays">
          <thead><tr><th><label><input type="checkbox" checked>Cell/Point Array Status</label></th></tr></thead>
          <tbody><tr><td><label><input type="checkbox" checked><svg><use href="#dots"/></svg>m</label></td></tr></tbody>
        </table>
        <div class="section"><button type="button" class="fold"><svg><use href="#minus"/></svg><span>Display (StructuredGridRepresentation)</span></button><button type="button" class="btn" aria-label="Copy"><svg><use href="#copy"/></svg></button><button type="button" class="btn off" aria-label="Paste"><svg><use href="#paste"/></svg></button><button type="button" class="btn" aria-label="Restore"><svg><use href="#refresh"/></svg></button><button type="button" class="btn" aria-label="Save"><svg><use href="#save"/></svg></button></div>
        <div class="pair"><label for="rep">Representation</label><select class="combo" id="rep"><option>Surface</option></select></div>
        <h3>Coloring</h3>
        <div class="stack">
          <div class="line"><select class="combo swatch wide" aria-label="Color by"><option>Solid Color</option></select><select class="combo off wide" aria-label="Color component" disabled><option></option></select></div>
          <div class="icons">
            <button type="button" class="btn"><svg><use href="#editmap"/></svg>Edit</button>
            <button type="button" class="btn" aria-label="Separate"><svg><use href="#separate"/></svg></button>
            <button type="button" class="btn off" aria-label="Rescale"><svg class="ghost"><use href="#range"/></svg></button>
            <button type="button" class="btn off" aria-label="Rescale custom"><svg class="ghost dark" viewBox="0 0 24 24"><use href="#range"/><text x="12" y="22" class="ico-letter">C</text></svg></button>
            <button type="button" class="btn off" aria-label="Rescale temporal"><svg class="ghost dark" viewBox="0 0 24 24"><use href="#range"/><text x="13" y="22" class="ico-letter">t</text></svg></button>
            <button type="button" class="btn off" aria-label="Choose preset"><svg><use href="#folderheart"/></svg></button>
            <button type="button" class="btn off" aria-label="Show legend"><svg><use href="#bar"/></svg></button>
            <button type="button" class="btn off" aria-label="Edit legend"><svg class="ghost dark" viewBox="0 0 24 24"><path d="M4 1h13v20H4z" fill="url(#g-grey)"/><text x="10" y="22" class="ico-letter">e</text></svg></button>
          </div>
        </div>
        <h3>Styling</h3>
        <div class="pair"><label for="opacity">Opacity</label><div class="slide"><input type="range" class="full" id="opacity" min="0" max="1" value="1"><input class="field" aria-label="Opacity value" value="1"></div></div>
        <h3>Lighting</h3>
        <div class="pair"><label for="specular">Specular</label><div class="slide"><input type="range" id="specular" min="0" max="1" value="0"><input class="field" aria-label="Specular value" value="0"></div></div>
        <h3>OSPRay</h3>
        <label class="check"><input type="checkbox">OSPRay Use Scale Array</label>
        <hr>
        <div class="gridrow"><label class="check"><input type="checkbox">Data Axes Grid</label><button type="button" class="btn">Edit</button></div>
        <div class="pair two"><label for="maxlabels">Maximum Number Of Labels</label><input class="field" id="maxlabels" value="100"></div>
        <div class="section"><button type="button" class="fold"><svg><use href="#minus"/></svg><span>View (Render View)</span></button><button type="button" class="btn" aria-label="Copy"><svg><use href="#copy"/></svg></button><button type="button" class="btn off" aria-label="Paste"><svg><use href="#paste"/></svg></button><button type="button" class="btn" aria-label="Restore"><svg><use href="#refresh"/></svg></button><button type="button" class="btn" aria-label="Save"><svg><use href="#save"/></svg></button></div>
        <div class="gridrow"><label class="check"><input type="checkbox">Axes Grid</label><button type="button" class="btn">Edit</button></div>
        <label class="check"><input type="checkbox">Center Axes Visibility</label>
        <h3>Orientation Axes</h3>
        <label class="check"><input type="checkbox" checked>Orientation Axes Visibility</label>
        <hr>
        <label class="check"><input type="checkbox">Hidden Line Removal</label>
        <label class="check"><input type="checkbox">Camera Parallel Projection</label>
        <h3 class="apart">Background</h3>
        <div class="stack">
          <select class="combo" aria-label="Background mode"><option>Single color</option></select>
          <div class="colorrow"><button type="button" class="btn color"><i></i>Color</button><button type="button" class="btn arrow" aria-label="Color menu"></button><button type="button" class="btn restore">Restore Default</button></div>
        </div>
        <h3>OSPRay Rendering</h3>
        <label class="check"><input type="checkbox">Enable OSPRay</label>
      </form>
    </section>
  </aside>
  <div class="vsplit"></div>

  <main class="views">
    <div class="tabs layout"><button class="tab current"><i class="win"></i>Layout #1<svg><use href="#close"/></svg></button><button class="tab plus">+</button></div>
    <div class="page">
      <div class="viewbar">
        <button aria-label="Camera undo"><svg><use href="#camundo"/></svg></button>
        <button aria-label="Camera redo"><svg><use href="#camredo"/></svg></button>
        <i class="sep"></i>
        <button class="dim">2D</button>
        <button aria-label="Adjust camera"><svg><use href="#camgo"/></svg></button>
        <i class="sep"></i>
        <button aria-label="Add selection"><svg><use href="#seladd"/></svg></button>
        <button aria-label="Subtract selection"><svg><use href="#selsub"/></svg></button>
        <button aria-label="Toggle selection"><svg><use href="#seltog"/></svg></button>
        <i class="sep"></i>
        <button aria-label="Select cells on"><svg><use href="#selcell"/></svg></button>
        <button aria-label="Select points on"><svg><use href="#selpt"/></svg></button>
        <button aria-label="Select cells through"><svg><use href="#frcell"/></svg></button>
        <button aria-label="Select points through"><svg><use href="#frpt"/></svg></button>
        <button aria-label="Select cells polygon"><svg><use href="#polycell"/></svg></button>
        <button aria-label="Select points polygon"><svg><use href="#polypt"/></svg></button>
        <button aria-label="Select block"><svg><use href="#selblk"/></svg></button>
        <button aria-label="Interactive cells"><svg><use href="#tri"/></svg></button>
        <button aria-label="Interactive points"><svg><use href="#pts"/></svg></button>
        <button aria-label="Hover points"><svg viewBox="0 0 14 14"><use href="#hoverpt"/><text x="4" y="12" class="ico-q">?</text></svg></button>
        <button aria-label="Hover cells"><svg viewBox="0 0 14 14"><use href="#hovercell"/><text x="5" y="11" class="ico-q">?</text></svg></button>
        <button aria-label="Clear selection"><svg><use href="#trash"/></svg></button>
        <a href="#renderview" class="viewname">RenderView1</a>
        <div class="frames">
          <button class="btn" aria-label="Split horizontal"><svg><use href="#splith"/></svg></button>
          <button class="btn" aria-label="Split vertical"><svg><use href="#splitv"/></svg></button>
          <button class="btn" aria-label="Maximize"><svg><use href="#maxi"/></svg></button>
          <button class="btn soft" aria-label="Undock"><svg><use href="#float"/></svg></button>
          <button class="btn soft" aria-label="Close view"><svg><use href="#close"/></svg></button>
        </div>
      </div>
      <div class="render" id="renderview">
        <div class="surface"></div>
        <svg class="triad" viewBox="0 0 160 160">
          <path d="M20 34v92" stroke="#d9d940" stroke-width="1"/>
          <path d="M48 136h74" stroke="#e0141c" stroke-width="1"/>
          <text x="23" y="36">Y</text><text x="25" y="138">Z</text><text x="125" y="137">X</text>
          <path d="M20 9l10 25q-10 3-20 0z" fill="#e6e600"/><path d="M20 9l5 25h5zM20 9l-4 25h-6z" fill="#a8a800"/><path d="M10 34q10-2 20 0-10 3-20 0z" fill="#111"/>
          <path d="M145 136l-24-10q-3 10 0 20z" fill="#e60000"/><path d="M145 136l-24 3v7z" fill="#9a0000"/><path d="M121 126q3 10 0 20-3-10 0-20z" fill="#111"/>
          <circle cx="20" cy="136" r="11.500" fill="#006000"/>
        </svg>
      </div>
    </div>
  </main>
</div>

<footer class="status">
  <button class="btn" aria-label="Abort" disabled><svg viewBox="0 0 14 14"><path d="M3 3l8 8M11 3l-8 8" stroke="#aaa" stroke-width="4"/></svg></button>
  <div class="progress"></div>
  <i class="sizegrip"></i>
</footer>
</body>
</html>
```

FILE: styles.css
```css
:root {
  --bg: #efebe7;
  --line: #b3b0ac;
  --edge: #a6a3a0;
}
* { box-sizing: border-box; }
body {
  margin: 0;
  height: 100vh;
  display: flex;
  flex-direction: column;
  overflow: hidden;
  background: var(--bg);
  border-top: 1px solid #1b2a41;
  border-right: 3px solid #141414;
  color: #000;
  font: 12px/14px "Liberation Mono", monospace;
}
button, input, select { font: inherit; color: inherit; margin: 0; }
button { background: none; border: 0; padding: 0; }
.defs { position: absolute; width: 0; height: 0; }
.ico-letter { font: italic 900 19px "Open Sans", sans-serif; fill: #111; }
.ico-axis { font: bold 10px "Liberation Sans", sans-serif; fill: #7a7a76; }
.ico-q { font: bold 13px "Liberation Sans", sans-serif; fill: #66705a; }

.menubar { flex: none; height: 17px; display: flex; gap: 1px; padding: 0 4px; border-bottom: 1px solid #d0cdc9; }
.menubar button { padding: 1px 6px 0; }

.toolbar {
  flex: none;
  height: 39px;
  display: flex;
  align-items: center;
  background: linear-gradient(#f8f5f2, var(--bg));
  border-bottom: 1px solid var(--line);
}
.spaced { gap: 1px; height: 38px; }
.grip {
  flex: none;
  width: 17px;
  height: 18px;
  background: radial-gradient(circle, #b5b2ae 1px, transparent 1px) center / 3px 3px content-box;
  padding: 0 7px 0 6px;
}
.spaced .grip { width: 16px; }
.toolbar .grip:first-child { width: 13px; padding: 0 4px 0 5px; }
.spaced .grip:first-child { width: 12px; }
.sep { flex: none; width: 6px; height: 20px; padding: 0 3px 0 2px; background: #d3d0cc content-box; }
.tool { flex: none; width: 32px; height: 32px; display: grid; place-items: center; border-radius: 3px; position: relative; }
.tool svg { width: 24px; height: 24px; overflow: visible; }
.pressed { background: #dad6d3; border: 1px solid var(--edge); }
.drop::after { content: ""; position: absolute; right: 2px; bottom: 4px; border: 3px solid transparent; border-top: 3px solid #444; border-bottom: 0; }

.field { height: 22px; width: 100%; min-width: 0; padding: 0 3px; background: #fff; border: 1px solid var(--edge); border-radius: 3px; }
.field::placeholder { color: #7d7d7d; opacity: 1; }
.field:disabled { background: var(--bg); color: #b5b2ae; }
.time { width: 125px; margin: 0 2px 0 1px; }
.spin { display: flex; width: 56px; height: 22px; margin-right: 5px; background: #fff; border: 1px solid var(--edge); border-radius: 3px; overflow: hidden; }
.spin input { flex: 1; min-width: 0; border: 0; padding: 0 4px; background: none; }
.arrows { width: 14px; display: grid; place-items: center; background: #f5f3f1; border-left: 1px solid var(--line); }
.arrows i { border: 4px solid transparent; border-top: 0; border-bottom: 4px solid #555; }
.arrows i + i { border-top: 4px solid #aaa; border-bottom: 0; }

.combo {
  appearance: none;
  width: 100%;
  height: 22px;
  padding: 0 20px 0 5px;
  border: 1px solid var(--edge);
  border-radius: 3px;
  background:
    url("data:image/svg+xml,%3Csvg xmlns='http://www.w3.org/2000/svg' width='8' height='5'%3E%3Cpath d='M0 0h8L4 5z' fill='%23555'/%3E%3C/svg%3E") no-repeat right 6px center,
    linear-gradient(#fdfcfc, #edeae7);
}
.swatch {
  height: 24px;
  padding-left: 24px;
  background:
    url("data:image/svg+xml,%3Csvg xmlns='http://www.w3.org/2000/svg' width='8' height='5'%3E%3Cpath d='M0 0h8L4 5z' fill='%23555'/%3E%3C/svg%3E") no-repeat right 6px center,
    url("data:image/svg+xml,%3Csvg xmlns='http://www.w3.org/2000/svg' width='14' height='14'%3E%3Ccircle cx='7' cy='7' r='6' fill='%23c38547' stroke='%23333'/%3E%3C/svg%3E") no-repeat 6px center,
    linear-gradient(#fdfcfc, #edeae7);
}
.combo:disabled {
  opacity: 1;
  border-color: #c6c3bf;
  background:
    url("data:image/svg+xml,%3Csvg xmlns='http://www.w3.org/2000/svg' width='8' height='5'%3E%3Cpath d='M0 0h8L4 5z' fill='%23ddd'/%3E%3C/svg%3E") no-repeat right 6px center,
    linear-gradient(#f8f6f4, #efebe7);
}
.mid { flex: none; width: 150px; }
.small { flex: none; width: 79px; margin-left: 4px; }

.workspace { flex: 1; min-height: 0; display: flex; }
.dock {
  flex: none;
  width: 402px;
  display: grid;
  grid-template-columns: minmax(0, 1fr);
  grid-template-rows: 21px minmax(0, 627fr) 7px minmax(0, 1212fr);
}
.vsplit { flex: none; align-self: center; width: 6px; height: 18px; padding: 0 1px 0 2px; background: radial-gradient(circle, #b5b2ae 1px, transparent 1px) center / 3px 3px content-box; }
.dock-title { display: flex; align-items: center; gap: 2px; padding: 2px 1px 0 4px; }
.dock-title span { flex: 1; }
.mini { width: 12px; height: 12px; display: block; }
.mini svg { width: 12px; height: 12px; display: block; }
.tree { background: #fff; border: 1px solid var(--line); border-left-color: #d0cdc9; padding-top: 2px; }
.node { height: 22px; display: flex; align-items: center; }
.vis { width: 20px; display: grid; place-items: center; }
.vis svg { width: 14px; height: 12px; margin-left: 2px; }
.item { height: 18px; display: flex; align-items: center; padding: 0 4px 0 2px; gap: 2px; }
.item svg { width: 15px; height: 15px; }
.item .host { width: 15px; height: 14px; }
.selected { background: #308cc6; color: #fff; }
.splitter { background: radial-gradient(circle, #b5b2ae 1px, transparent 1px) center / 3px 3px content-box; padding: 2px 193px; }

.lower { overflow: hidden; }
.tabs { height: 23px; display: flex; align-items: flex-end; box-shadow: inset 0 -1px var(--line); }
.tab { height: 21px; padding: 2px 10px 0; background: #dcd8d4; border: 1px solid var(--line); border-left: 0; border-radius: 3px 3px 0 0; }
.tab.current { height: 23px; background: linear-gradient(#fbf9f8, var(--bg)); border-left: 1px solid var(--line); border-bottom: 0; }
.lower .dock-title { height: 23px; padding-top: 1px; }

.props { display: flex; flex-direction: column; gap: 6px; padding: 6px 9px 0; }
.btn {
  height: 24px;
  display: flex;
  align-items: center;
  justify-content: center;
  background: linear-gradient(#fdfcfc, #edeae7);
  border: 1px solid var(--edge);
  border-radius: 3px;
}
.btn svg { width: 16px; height: 16px; }
.btn .cross { width: 14px; height: 14px; margin-right: 2px; }
.btn:disabled { color: #b9b6b2; border-color: #c0bdb9; }
.btn.off { border-color: #c6c3bf; background: linear-gradient(#f8f6f4, #efebe7); }
.faded { filter: grayscale(1); opacity: .5; }
.actions { display: grid; grid-template-columns: repeat(4, 1fr); gap: 2px; }
.help { font: bold 17px/20px "Liberation Sans", sans-serif; color: #2a96d8; }
.line { display: flex; align-items: center; gap: 4px; }
.search { height: 23px; gap: 2px; align-items: flex-start; }
.grow { flex: 1; }
.gear { width: 24px; height: 23px; }
.section { display: grid; grid-template-columns: 1fr repeat(4, 28px); gap: 4px; align-items: center; }
.fold { height: 26px; min-width: 0; display: flex; align-items: center; gap: 8px; padding: 0 6px 0 10px; border: 1px solid var(--line); font-weight: bold; }
.fold svg { flex: none; width: 13px; height: 6px; }
.fold span { overflow: hidden; white-space: nowrap; }
.arrays { height: 54px; border-collapse: collapse; background: #fff; border: 1px solid var(--line); }
.arrays th { height: 20px; padding: 0 2px; text-align: left; font-weight: normal; background: linear-gradient(#fbf9f8, var(--bg)); border-bottom: 1px solid var(--line); }
.arrays td { padding: 2px 3px; vertical-align: top; }
.arrays label { display: flex; align-items: center; gap: 3px; }
.arrays svg { width: 16px; height: 16px; margin: 0 2px 0 3px; }
input[type="checkbox"] { appearance: none; flex: none; width: 14px; height: 14px; background: #fff; border: 1px solid var(--line); }
input[type="checkbox"]:checked { background: #fff url("data:image/svg+xml,%3Csvg xmlns='http://www.w3.org/2000/svg' width='12' height='12'%3E%3Cpath d='M3 6l2 3 4-7' fill='none' stroke='%23000' stroke-width='2'/%3E%3C/svg%3E") center no-repeat; }
.pair { display: grid; grid-template-columns: 102px 1fr; align-items: start; }
.two label { margin-top: -1px; line-height: 12px; padding-right: 1px; }
h3 { margin: 0; height: 15px; font: bold 12px/16px "Liberation Mono", monospace; border-bottom: 1px solid #969390; box-shadow: 0 1px #fff; }
.stack { display: flex; flex-direction: column; gap: 4px; }
.wide { width: 174px; }
.icons { display: grid; grid-template-columns: 1fr repeat(7, 28px); gap: 4px; }
.ghost { filter: grayscale(1); opacity: .5; overflow: visible; }
.ghost.dark { opacity: .65; }
.slide { display: grid; grid-template-columns: 1fr 138px; gap: 7px; align-items: center; }
input[type="range"] { appearance: none; width: 100%; height: 14px; margin: 0; background: none; }
input[type="range"]::-webkit-slider-runnable-track { height: 5px; background: #dedbd8; border: 1px solid #aaa7a4; border-radius: 2px; }
input[type="range"].full::-webkit-slider-runnable-track { background: #3da2e0; border-color: #2a75a5; }
input[type="range"]::-webkit-slider-thumb { appearance: none; width: 13px; height: 13px; margin-top: -5px; background: #fbfafa; border: 1px solid #999693; border-radius: 3px; }
.check { height: 16px; display: flex; align-items: center; gap: 5px; padding-top: 1px; }
hr { width: 100%; height: 2px; margin: 0 0 3px; border: 0; background: linear-gradient(#969390 50%, #fff 50%); }
.gridrow { display: flex; align-items: center; gap: 8px; }
.gridrow .check { padding-top: 0; }
.gridrow .btn { flex: 1; height: 20px; }
.apart { margin-top: 2px; }
.colorrow { display: flex; }
.colorrow .btn { height: 23px; }
.colorrow .color { flex: 1; justify-content: flex-start; gap: 5px; padding-left: 4px; }
.color i { width: 15px; height: 15px; border-radius: 50%; background: #52576e; border: 1px solid #222; }
.colorrow .arrow { width: 13px; }
.arrow::after { content: ""; border: 4px solid transparent; border-top: 5px solid #444; border-bottom: 0; }
.colorrow .restore { height: 20px; width: 113px; margin: 1px 0 0 4px; }

.views { flex: 1; min-width: 0; display: flex; flex-direction: column; }
.layout { flex: none; height: 25px; }
.layout .tab { height: 22px; }
.layout .current { height: 24px; display: flex; align-items: center; background: linear-gradient(#fff, #fdf9f6); padding: 2px 11px 0; }
.layout .current svg { width: 12px; height: 12px; margin-left: 1px; }
.layout .plus { width: 31px; padding: 2px 0 0; background: #e9e5e2; }
.win { width: 9px; height: 9px; border: 1px solid #000; border-top-width: 2px; margin-right: 6px; }
.page { flex: 1; min-height: 0; display: flex; flex-direction: column; padding: 0 1px; background: #fdf9f6; border: 1px solid var(--line); border-top: 0; }
.viewbar { flex: none; height: 22px; display: flex; align-items: center; }
.viewbar > button { flex: none; width: 20px; height: 20px; display: grid; place-items: center; }
.viewbar > button svg { width: 14px; height: 14px; overflow: visible; }
.viewbar .dim { font: 11px/14px "Open Sans", sans-serif; color: #444; }
.viewname { margin-left: auto; margin-right: 11px; font-weight: bold; color: #000; text-decoration: underline; }
.frames { display: flex; gap: 1px; }
.frames .btn { width: 20px; height: 20px; }
.frames svg { flex: none; width: 10px; height: 10px; }
.frames .soft svg { width: 12px; height: 12px; opacity: .8; }
.render { flex: 1; min-height: 0; position: relative; background: #52576e; border: 2px solid #00f; box-shadow: inset 0 0 0 1px #fff; }
.surface { position: absolute; left: 11.3%; top: 31.6%; width: 77.5%; height: 35.1%; background: #c8c5bd; }
.triad { position: absolute; left: 208px; bottom: 203px; width: 160px; height: 160px; }
.triad text { font: 39px "Liberation Sans", sans-serif; fill: #fff; }

.status { flex: none; height: 23px; display: flex; align-items: flex-start; padding: 4px 0 0; }
.status .btn { width: 20px; height: 19px; margin-left: 49.7%; }
.status svg { width: 14px; height: 14px; }
.progress { flex: 1; height: 19px; margin: 0 13px 0 2px; border: 1px solid #fff; border-top-color: #969390; border-left-color: #969390; }
.sizegrip { width: 11px; height: 11px; margin: 8px 1px 0 0; background: radial-gradient(circle, #b5b2ae 1px, transparent 1px) 0 0 / 3px 3px; clip-path: polygon(100% 0, 100% 100%, 0 100%); }
```
